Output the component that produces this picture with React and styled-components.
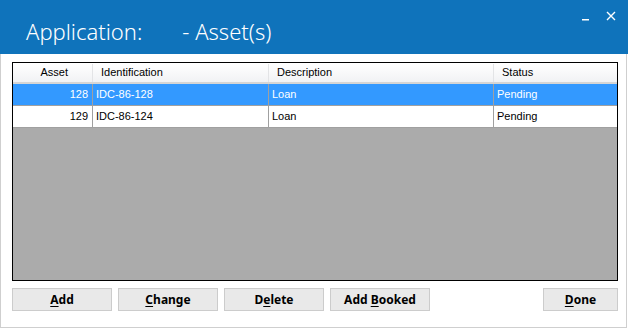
import styled, { createGlobalStyle } from 'styled-components';

const GlobalStyle = createGlobalStyle`
  html, body {
    margin: 0;
    padding: 0;
    background: #ffffff;
  }
  * {
    box-sizing: border-box;
  }
`;

const Window = styled.div`
  width: 627px;
  height: 328px;
  display: flex;
  flex-direction: column;
  background: #ffffff;
  font-family: 'Noto Sans', 'Open Sans', sans-serif;
`;

const TitleBar = styled.div`
  height: 54px;
  flex-shrink: 0;
  background: #0f73bb;
  color: #ffffff;
  display: flex;
  align-items: flex-start;
  justify-content: space-between;
  width: 628px;
`;

const Title = styled.h1`
  margin: 0;
  padding: 17px 0 0 26px;
  font-size: 22px;
  font-weight: 300;
  white-space: pre;
  line-height: 28px;
`;

const Controls = styled.div`
  display: flex;
  gap: 15px;
  padding: 9px 12px 0 0;
`;

const ControlButton = styled.span`
  width: 10px;
  height: 14px;
  display: flex;
  align-items: center;
  justify-content: center;
`;

const Body = styled.div`
  flex: 1;
  border: 1px solid #cfcfcf;
  border-top: none;
  padding: 8px 10px 0 11px;
  display: flex;
  flex-direction: column;
  gap: 7px;
`;

const Grid = styled.div`
  width: 606px;
  height: 219px;
  border: 1px solid #000000;
  background: #ababab;
  display: flex;
  flex-direction: column;
  font-family: 'Liberation Sans', Arial, sans-serif;
  font-size: 11px;
  color: #000000;
`;

const cols = '80px 176px 225px 1fr';

const HeaderRow = styled.div`
  display: grid;
  grid-template-columns: ${cols};
  height: 21px;
  background: linear-gradient(#ffffff, #f1f2f4);
  border-bottom: 2px solid #d5d5d5;
  border-top: 1px solid #ffffff;
`;

const HeaderCell = styled.div`
  border-right: 1px solid #e3e4e6;
  padding: 0 ${p => (p.$right ? '24px' : '0')} 0 ${p => (p.$right ? '0' : '8px')};
  text-align: ${p => (p.$right ? 'right' : 'left')};
  line-height: 17px;
  &:last-child {
    border-right: none;
  }
`;

const Row = styled.div`
  display: grid;
  grid-template-columns: ${cols};
  height: 22px;
  background: ${p => (p.$selected ? '#3399ff' : '#ffffff')};
  color: ${p => (p.$selected ? '#ffffff' : '#000000')};
  border-bottom: 1px solid #a0a0a0;
`;

const Cell = styled.div`
  border-right: 1px solid #a0a0a0;
  padding: 0 ${p => (p.$right ? '4px' : '0')} 0 ${p => (p.$right ? '0' : '3px')};
  text-align: ${p => (p.$right ? 'right' : 'left')};
  line-height: 21px;
  &:last-child {
    border-right: none;
  }
`;

const ButtonBar = styled.div`
  display: flex;
  gap: 6px;
  width: 606px;
`;

const Button = styled.button`
  width: ${p => p.$width || 100}px;
  height: 23px;
  margin-left: ${p => (p.$push ? 'auto' : '0')};
  background: #e9e9e9;
  border: 1px solid #cccccc;
  font-family: 'Noto Sans', 'Open Sans', sans-serif;
  font-size: 12px;
  font-weight: 700;
  color: #000000;
  padding: 0;
  line-height: 19px;
  u {
    text-decoration-thickness: 1px;
    text-underline-offset: 2px;
  }
`;

const assets = [
  { id: 128, ident: 'IDC-86-128', desc: 'Loan', status: 'Pending', selected: true },
  { id: 129, ident: 'IDC-86-124', desc: 'Loan', status: 'Pending' },
];

export default function App() {
  return (
    <Window>
      <GlobalStyle />
      <TitleBar>
        <Title>{'Application:       - Asset(s)'}</Title>
        <Controls>
          <ControlButton>
            <svg width="10" height="14" viewBox="0 0 10 14">
              <rect x="1" y="10" width="7" height="1.5" fill="#fff" />
            </svg>
          </ControlButton>
          <ControlButton>
            <svg width="10" height="10" viewBox="0 0 10 10">
              <path d="M1 1 L9 9 M9 1 L1 9" stroke="#fff" strokeWidth="1.4" />
            </svg>
          </ControlButton>
        </Controls>
      </TitleBar>
      <Body>
        <Grid>
          <HeaderRow>
            <HeaderCell $right>Asset</HeaderCell>
            <HeaderCell>Identification</HeaderCell>
            <HeaderCell>Description</HeaderCell>
            <HeaderCell>Status</HeaderCell>
          </HeaderRow>
          {assets.map(a => (
            <Row key={a.id} $selected={a.selected}>
              <Cell $right>{a.id}</Cell>
              <Cell>{a.ident}</Cell>
              <Cell>{a.desc}</Cell>
              <Cell>{a.status}</Cell>
            </Row>
          ))}
        </Grid>
        <ButtonBar>
          <Button><u>A</u>dd</Button>
          <Button><u>C</u>hange</Button>
          <Button>D<u>e</u>lete</Button>
          <Button>Add <u>B</u>ooked</Button>
          <Button $width={75} $push><u>D</u>one</Button>
        </ButtonBar>
      </Body>
    </Window>
  );
}
